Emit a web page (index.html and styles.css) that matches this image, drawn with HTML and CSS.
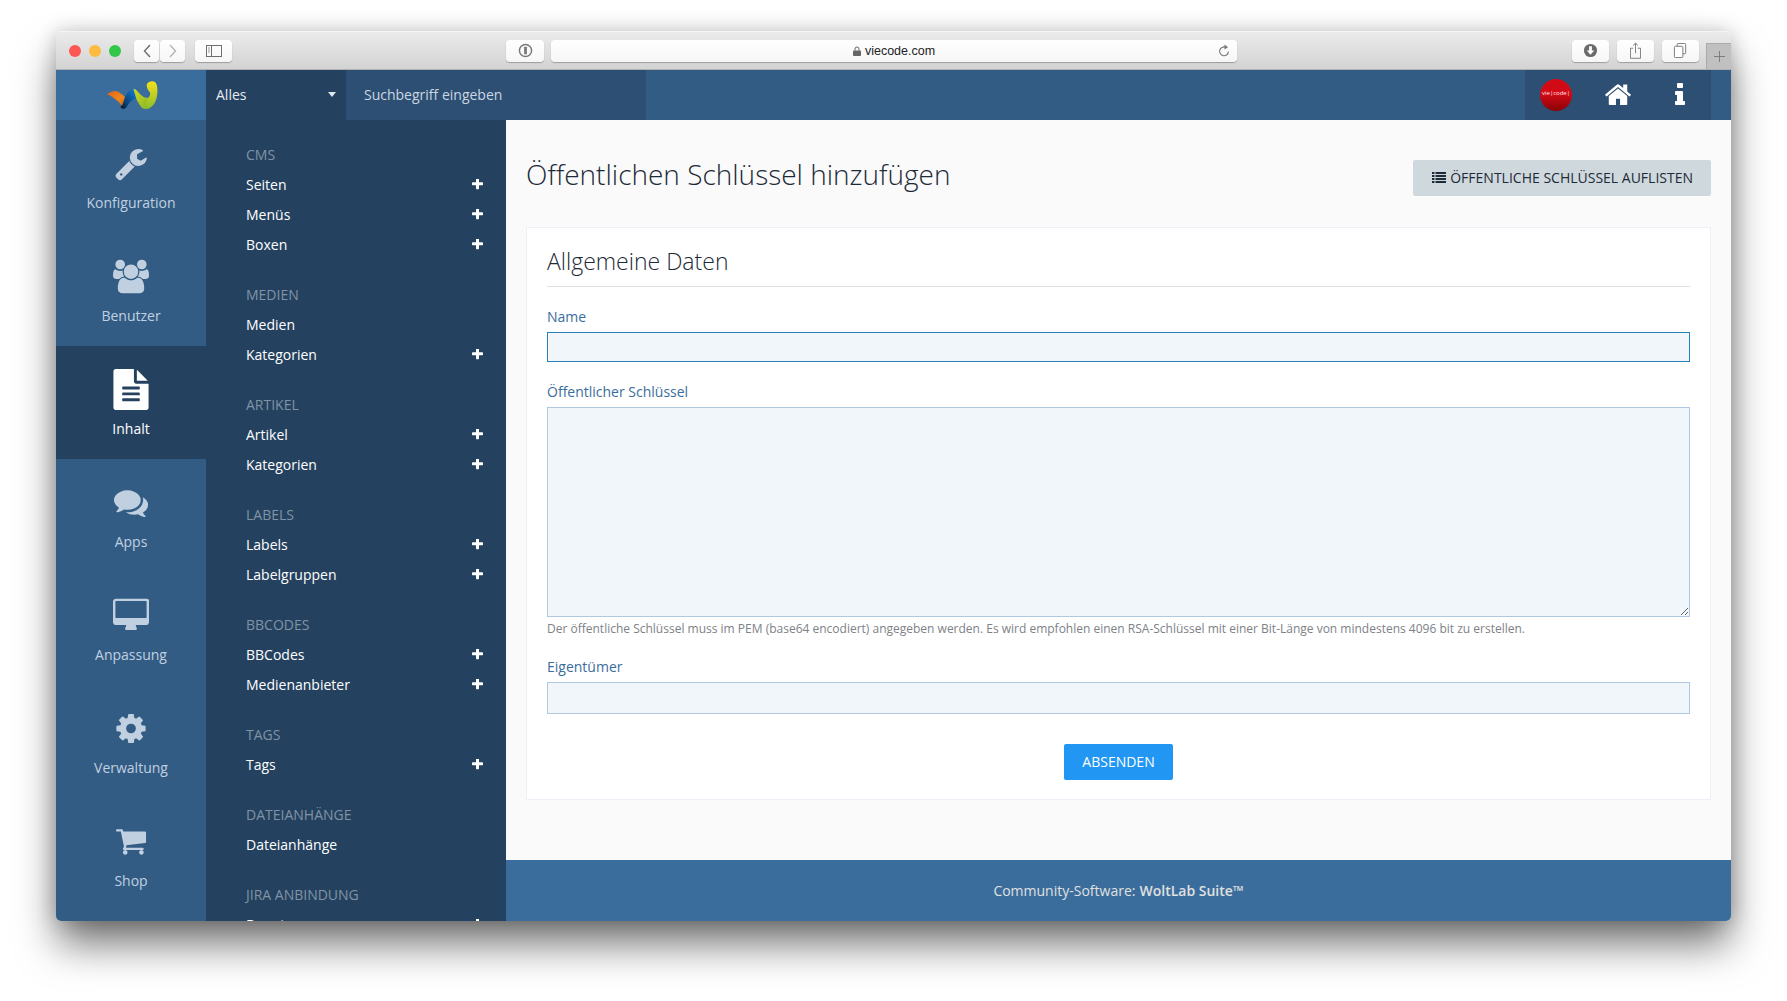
FILE: index.html
```html
<!DOCTYPE html>
<html lang="de">
<head>
<meta charset="utf-8">
<title>Öffentlichen Schlüssel hinzufügen</title>
<link rel="stylesheet" href="styles.css">
</head>
<body>
<svg class="defs" aria-hidden="true">
  <symbol id="i-plus" viewBox="192 192 1408 1408"><path d="M1600 736v192q0 40-28 68t-68 28h-416v416q0 40-28 68t-68 28h-192q-40 0-68-28t-28-68v-416h-416q-40 0-68-28t-28-68v-192q0-40 28-68t68-28h416v-416q0-40 28-68t68-28h192q40 0 68 28t28 68v416h416q40 0 68 28t28 68z" transform="translate(0 -32)"/></symbol>
  <symbol id="i-wrench" viewBox="-50 -50 1892 1892"><path d="M448 1472q0-26-19-45t-45-19-45 19-19 45 19 45 45 19 45-19 19-45zm644-420l-682 682q-37 37-90 37-52 0-91-37l-106-108q-38-36-38-90 0-53 38-91l681-681q39 98 114.5 173.5t173.5 114.5zm634-435q0 39-23 106-47 134-164.5 217.5t-258.5 83.5q-185 0-316.5-131.5t-131.5-316.5 131.5-316.5 316.5-131.5q58 0 121.5 16.5t107.5 46.5q16 11 16 28t-16 28l-293 169v224l193 107q5-3 79-48.5t135.5-81 70.5-35.5q15 0 23.5 10t8.5 25z"/></symbol>
  <symbol id="i-users" viewBox="0 0 1920 1792"><path d="M593 896q-162 5-265 128h-134q-82 0-138-40.5t-56-118.5q0-353 124-353 6 0 43.5 21t97.5 42.5 119 21.5q67 0 133-23-5 37-5 66 0 139 81 256zm1071 637q0 120-73 189.5t-194 69.5h-874q-121 0-194-69.5t-73-189.5q0-53 3.5-103.5t14-109 26.5-108.5 43-97.5 62-81 85.5-53.5 111.5-20q10 0 43 21.5t73 48 107 48 135 21.5 135-21.5 107-48 73-48 43-21.5q61 0 111.5 20t85.5 53.5 62 81 43 97.5 26.5 108.5 14 109 3.5 103.5zm-1024-1277q0 106-75 181t-181 75-181-75-75-181 75-181 181-75 181 75 75 181zm704 384q0 159-112.5 271.5t-271.5 112.5-271.5-112.5-112.5-271.5 112.5-271.5 271.5-112.5 271.5 112.5 112.5 271.5zm576 225q0 78-56 118.5t-138 40.5h-134q-103-123-265-128 81-117 81-256 0-29-5-66 66 23 133 23 59 0 119-21.5t97.5-42.5 43.5-21q124 0 124 353zm-128-609q0 106-75 181t-181 75-181-75-75-181 75-181 181-75 181 75 75 181z"/></symbol>
  <symbol id="i-file" viewBox="128 0 1536 1792"><path d="M1596 476q14 14 28 36h-472v-472q22 14 36 28zm-476 164h544v1056q0 40-28 68t-68 28h-1344q-40 0-68-28t-28-68v-1600q0-40 28-68t68-28h800v544q0 40 28 68t68 28zm160 736v-64q0-14-9-23t-23-9h-704q-14 0-23 9t-9 23v64q0 14 9 23t23 9h704q14 0 23-9t9-23zm0-256v-64q0-14-9-23t-23-9h-704q-14 0-23 9t-9 23v64q0 14 9 23t23 9h704q14 0 23-9t9-23zm0-256v-64q0-14-9-23t-23-9h-704q-14 0-23 9t-9 23v64q0 14 9 23t23 9h704q14 0 23-9t9-23z"/></symbol>
  <symbol id="i-comments" viewBox="-50 -50 1892 1892"><path d="M1408 768q0 139-94 257t-256.5 186.5-353.5 68.5q-86 0-176-16-124 88-278 128-36 9-86 16h-3q-11 0-20.5-8t-11.500-21q-1-3-1-6.500t.5-6.500 2-6l2.500-5 3.500-5.500 4-5 4.500-5 4-4.500q5-6 23-25t26-29.500 22.500-29 25-38.500 20.500-44q-124-72-195-177t-71-224q0-139 94-257t256.500-186.500 353.500-68.500 353.500 68.500 256.500 186.500 94 257zm384 256q0 120-71 224.500t-195 176.500q10 24 20.500 44t25 38.500 22.500 29 26 29.500 23 25q1 1 4 4.500t4.500 5 4 5 3.500 5.500l2.500 5 2 6 .5 6.500-1 6.500q-3 14-13 22t-22 7q-50-7-86-16-154-40-278-128-90 16-176 16-271 0-472-132 58 4 88 4 161 0 309-45t264-129q125-92 192-212t67-254q0-77-23-152 129 71 204 178t75 230z"/></symbol>
  <symbol id="i-desktop" viewBox="0 0 1920 1792"><path d="M1792 992v-832q0-13-9.500-22.500t-22.500-9.500h-1600q-13 0-22.500 9.500t-9.500 22.500v832q0 13 9.500 22.500t22.500 9.500h1600q13 0 22.500-9.500t9.500-22.500zm128-832v1088q0 66-47 113t-113 47h-544q0 37 16 77.500t32 71 16 43.500q0 26-19 45t-45 19h-512q-26 0-45-19t-19-45q0-14 16-44t32-70 16-78h-544q-66 0-113-47t-47-113v-1088q0-66 47-113t113-47h1632q66 0 113 47t47 113z"/></symbol>
  <symbol id="i-cog" viewBox="-50 -50 1892 1892"><path d="M1152 896q0-106-75-181t-181-75-181 75-75 181 75 181 181 75 181-75 75-181zm512-109v222q0 12-8 23t-20 13l-185 28q-19 54-39 91 35 50 107 138 10 12 10 25t-9 23q-27 37-99 108t-94 71q-12 0-26-9l-138-108q-44 23-91 38-16 136-29 186-7 28-36 28h-222q-14 0-24.500-8.500t-11.500-21.500l-28-184q-49-16-90-37l-141 107q-10 9-25 9-14 0-25-11-126-114-165-168-7-10-7-23 0-12 8-23 15-21 51-66.500t54-70.500q-27-50-41-99l-183-27q-13-2-21-12.500t-8-23.500v-222q0-12 8-23t19-13l186-28q14-46 39-92-40-57-107-138-10-12-10-24 0-10 9-23 26-36 98.500-107.500t94.500-71.500q13 0 26 10l138 107q44-23 91-38 16-136 29-186 7-28 36-28h222q14 0 24.500 8.500t11.500 21.500l28 184q49 16 90 37l142-107q9-9 24-9 13 0 25 10 129 119 165 170 7 8 7 22 0 12-8 23-15 21-51 66.500t-54 70.500q26 50 41 98l183 28q13 2 21 12.500t8 23.500z"/></symbol>
  <symbol id="i-cart" viewBox="-100 -60 1992 1992"><path d="M704 1536q0 52-38 90t-90 38-90-38-38-90 38-90 90-38 90 38 38 90zm896 0q0 52-38 90t-90 38-90-38-38-90 38-90 90-38 90 38 38 90zm128-1088v512q0 24-16.500 42.500t-40.500 21.500l-1044 122q13 60 13 70 0 16-24 64h920q26 0 45 19t19 45-19 45-45 19h-1024q-26 0-45-19t-19-45q0-11 8-31.500t16-36 21.500-40 15.500-29.500l-177-823h-204q-26 0-45-19t-19-45 19-45 45-19h256q16 0 28.500 6.500t19.500 15.500 13 24.500 8 26 5.500 29.500 4.500 26h1201q26 0 45 19t19 45z"/></symbol>
  <symbol id="i-home" viewBox="90 230 1610 1310"><path d="M1472 992v480q0 26-19 45t-45 19h-384v-384h-256v384h-384q-26 0-45-19t-19-45v-480q0-1 .5-3t.5-3l575-474 575 474q1 2 1 6zm223-69l-62 74q-8 9-21 11h-3q-13 0-21-7l-692-577-692 577q-12 8-24 7-13-2-21-11l-62-74q-8-10-7-23.500t11-21.500l719-599q32-26 76-26t76 26l244 204v-195q0-14 9-23t23-9h192q14 0 23 9t9 23v408l219 182q10 8 11 21.500t-7 23.500z"/></symbol>
  <symbol id="i-info" viewBox="0 128 640 1408"><path d="M640 1344v128q0 26-19 45t-45 19h-512q-26 0-45-19t-19-45v-128q0-26 19-45t45-19h64v-384h-64q-26 0-45-19t-19-45v-128q0-26 19-45t45-19h384q26 0 45 19t19 45v576h64q26 0 45 19t19 45zm-128-1152v192q0 26-19 45t-45 19h-256q-26 0-45-19t-19-45v-192q0-26 19-45t45-19h256q26 0 45 19t19 45z"/></symbol>
</svg>

<div class="window">
  <div class="toolbar">
    <div class="lights">
      <span class="light light-red"></span>
      <span class="light light-yellow"></span>
      <span class="light light-green"></span>
    </div>
    <div class="nav-pair">
      <span class="tbtn tbtn-nav"><svg class="tico" viewBox="0 0 12 16"><path d="M9 2 3.500 8 9 14" fill="none" stroke="#6e6e6e" stroke-width="1.400"/></svg></span>
      <span class="tbtn tbtn-nav"><svg class="tico" viewBox="0 0 12 16"><path d="M3 2 8.500 8 3 14" fill="none" stroke="#b4b4b4" stroke-width="1.400"/></svg></span>
    </div>
    <span class="tbtn tbtn-wide"><svg class="tico-side" viewBox="0 0 16 12"><rect x=".5" y=".5" width="15" height="11" fill="none" stroke="#6e6e6e"/><path d="M5.500 0v12" stroke="#6e6e6e"/><path d="M2 3h2M2 5h2M2 7h2" stroke="#9a9a9a"/></svg></span>
    <span class="tbtn tbtn-pw"><svg class="tico-pw" viewBox="0 0 16 16"><circle cx="8" cy="8" r="6.500" fill="none" stroke="#7a7a7a" stroke-width="1.600"/><rect x="6.500" y="4" width="3" height="8" rx=".6" fill="#7a7a7a"/></svg></span>
    <div class="address">
      <span class="address-text"><svg class="lock" viewBox="0 0 8 10"><path d="M2 4.500V3a2 2 0 0 1 4 0v1.500" fill="none" stroke="#666" stroke-width="1"/><rect y="4.500" width="8" height="5.500" rx=".8" fill="#666"/></svg>viecode.com</span>
      <svg class="reload" viewBox="0 0 12 14"><path d="M7.500 3.200A4.400 4.400 0 1 0 10.400 7.500" fill="none" stroke="#777" stroke-width="1.100"/><path d="M6.500 0.500 10 3.200 6.500 5.500z" fill="#777"/></svg>
    </div>
    <span class="tbtn tbtn-wide"><svg class="tico-pw" viewBox="0 0 16 16"><circle cx="8" cy="8" r="7" fill="#6a6a6a"/><path d="M6.500 3.500h3V8H12l-4 4.500L4 8h2.500z" fill="#fff"/></svg></span>
    <span class="tbtn tbtn-wide"><svg class="tico-share" viewBox="0 0 12 18"><path d="M3.500 6.500H.5v11h11v-11h-3" fill="none" stroke="#777"/><path d="M6 12V1M3.300 3.600 6 1l2.700 2.600" fill="none" stroke="#777"/></svg></span>
    <span class="tbtn tbtn-wide"><svg class="tico-pw" viewBox="0 0 16 16"><rect x="4.500" y=".5" width="9" height="11" rx="1" fill="none" stroke="#777"/><rect x="1.500" y="3.500" width="9" height="12" rx="1" fill="#fff" stroke="#777"/></svg></span>
    <span class="newtab"><svg class="tico-plus" viewBox="0 0 12 12"><path d="M6 0v12M0 6h12" stroke="#777" stroke-width="1"/></svg></span>
  </div>

  <header class="topbar">
    <a class="logo">
      <svg class="logo-mark" viewBox="0 0 50 28">
        <defs>
          <linearGradient id="w-orange" x1="0" y1="0" x2="1" y2="1">
            <stop offset="0" stop-color="#e2601a"/>
            <stop offset=".6" stop-color="#f0861c"/>
            <stop offset="1" stop-color="#d2660f"/>
          </linearGradient>
          <linearGradient id="w-blue" x1="0" y1="1" x2="1" y2="0">
            <stop offset="0" stop-color="#07121f"/>
            <stop offset=".3" stop-color="#0a3f75"/>
            <stop offset=".65" stop-color="#0e62ab"/>
            <stop offset="1" stop-color="#1a86cc"/>
          </linearGradient>
          <linearGradient id="w-green" x1="0" y1="0" x2="1" y2="1">
            <stop offset="0" stop-color="#dcd81e"/>
            <stop offset="1" stop-color="#7cb52a"/>
          </linearGradient>
          <linearGradient id="w-lime" x1="0" y1="1" x2="0" y2="0">
            <stop offset="0" stop-color="#8fc026"/>
            <stop offset=".55" stop-color="#c6d022"/>
            <stop offset="1" stop-color="#f4e21e"/>
          </linearGradient>
        </defs>
        <path fill="url(#w-blue)" d="M13.500 26C16 21 18 15 21 11 23 9 25 8 26.500 7.700L30 17C27 18 25 19 23 21 21 23 20 26 18 27.500 17 28 14.500 28 13.500 26Z"/>
        <path fill="url(#w-orange)" d="M0 13.300C3 11 6 10 8 10 11 10 15 13 18 16L15 25C13 22 10 19 6 16.500 4 15 2 14 0 13.300Z"/>
        <path fill="url(#w-green)" d="M26.500 7.700C29 8 32 12 34 14 36 16 39 17.500 41.500 16.500L43 27C40 28.500 37 28 34.700 26.700 32 23 30 20 29 16.700 28 13 27 10 26.500 7.700Z"/>
        <path fill="url(#w-lime)" d="M41.500 16.500C43 15 43.500 13 43 11.500 41 9 39 6 40 3 41.500 0 46 -0.500 48 1 50.500 3 51 10 50 15 49 21 46 26 41 27.500 39 27 38 22 41.500 16.500Z"/>
      </svg>
    </a>
    <div class="search-scope"><span>Alles</span><span class="caret"></span></div>
    <div class="search-input">Suchbegriff eingeben</div>
    <div class="topbar-spacer"></div>
    <div class="user-box">
      <span class="avatar">vie|code|</span>
      <svg class="top-home"><use href="#i-home"/></svg>
      <svg class="top-info"><use href="#i-info"/></svg>
    </div>
  </header>

  <div class="body-row">
    <nav class="rail">
      <a class="rail-item"><svg class="rail-icon"><use href="#i-wrench"/></svg><span>Konfiguration</span></a>
      <a class="rail-item"><svg class="rail-icon"><use href="#i-users"/></svg><span>Benutzer</span></a>
      <a class="rail-item active"><svg class="rail-icon"><use href="#i-file"/></svg><span>Inhalt</span></a>
      <a class="rail-item"><svg class="rail-icon"><use href="#i-comments"/></svg><span>Apps</span></a>
      <a class="rail-item"><svg class="rail-icon"><use href="#i-desktop"/></svg><span>Anpassung</span></a>
      <a class="rail-item"><svg class="rail-icon"><use href="#i-cog"/></svg><span>Verwaltung</span></a>
      <a class="rail-item"><svg class="rail-icon"><use href="#i-cart"/></svg><span>Shop</span></a>
    </nav>

    <aside class="menu">
      <section class="menu-group">
        <h3>CMS</h3>
        <a class="menu-row">Seiten<svg class="plus"><use href="#i-plus"/></svg></a>
        <a class="menu-row">Menüs<svg class="plus"><use href="#i-plus"/></svg></a>
        <a class="menu-row">Boxen<svg class="plus"><use href="#i-plus"/></svg></a>
      </section>
      <section class="menu-group">
        <h3>Medien</h3>
        <a class="menu-row">Medien</a>
        <a class="menu-row">Kategorien<svg class="plus"><use href="#i-plus"/></svg></a>
      </section>
      <section class="menu-group">
        <h3>Artikel</h3>
        <a class="menu-row">Artikel<svg class="plus"><use href="#i-plus"/></svg></a>
        <a class="menu-row">Kategorien<svg class="plus"><use href="#i-plus"/></svg></a>
      </section>
      <section class="menu-group">
        <h3>Labels</h3>
        <a class="menu-row">Labels<svg class="plus"><use href="#i-plus"/></svg></a>
        <a class="menu-row">Labelgruppen<svg class="plus"><use href="#i-plus"/></svg></a>
      </section>
      <section class="menu-group">
        <h3>BBCodes</h3>
        <a class="menu-row">BBCodes<svg class="plus"><use href="#i-plus"/></svg></a>
        <a class="menu-row">Medienanbieter<svg class="plus"><use href="#i-plus"/></svg></a>
      </section>
      <section class="menu-group">
        <h3>Tags</h3>
        <a class="menu-row">Tags<svg class="plus"><use href="#i-plus"/></svg></a>
      </section>
      <section class="menu-group">
        <h3>Dateianhänge</h3>
        <a class="menu-row">Dateianhänge</a>
      </section>
      <section class="menu-group">
        <h3>Jira Anbindung</h3>
        <a class="menu-row">Benutzernamen<svg class="plus"><use href="#i-plus"/></svg></a>
      </section>
    </aside>

    <div class="page">
      <main class="content">
        <div class="content-head">
          <h1>Öffentlichen Schlüssel hinzufügen</h1>
          <a class="btn btn-list">
            <svg class="list-ico" viewBox="0 0 14 11"><path d="M0 0h2.500v2H0zM3.500 0H14v2H3.500zM0 3h2.500v2H0zM3.500 3H14v2H3.500zM0 6h2.500v2H0zM3.500 6H14v2H3.500zM0 9h2.500v2H0zM3.500 9H14v2H3.500z"/></svg>Öffentliche Schlüssel auflisten
          </a>
        </div>
        <form class="card">
          <h2>Allgemeine Daten</h2>
          <label class="field-label">Name</label>
          <input class="field field-focus" type="text">
          <label class="field-label">Öffentlicher Schlüssel</label>
          <textarea class="field field-area"></textarea>
          <p class="hint">Der öffentliche Schlüssel muss im PEM (base64 encodiert) angegeben werden. Es wird empfohlen einen RSA-Schlüssel mit einer Bit-Länge von mindestens 4096 bit zu erstellen.</p>
          <label class="field-label field-label-after">Eigentümer</label>
          <input class="field field-tall" type="text">
          <div class="submit-row"><button class="btn btn-primary" type="button">Absenden</button></div>
        </form>
      </main>
      <footer class="footer">Community-Software: <b>WoltLab Suite™</b></footer>
    </div>
  </div>
</div>
</body>
</html>
```
FILE: styles.css
```css
* { box-sizing: border-box; }
html, body { height: 100%; }
body {
  margin: 0;
  background: #fff;
  overflow: hidden;
  font-family: "Open Sans", "Noto Sans", sans-serif;
  font-size: 14px;
  color: #2d3e50;
}
a { color: inherit; text-decoration: none; }
.defs { display: none; }

.window {
  width: 1675px;
  height: 890px;
  margin: 31px 0 0 56px;
  border-radius: 5px;
  overflow: hidden;
  display: flex;
  flex-direction: column;
  box-shadow: 0 25px 40px -2px rgba(0, 0, 0, .55), 0 0 20px rgba(0, 0, 0, .2);
}

/* browser chrome */
.toolbar {
  flex: 0 0 39px;
  display: flex;
  align-items: center;
  padding: 0 0 0 13px;
  background: linear-gradient(#ebebeb, #d3d3d3);
  border-top: 1px solid #f4f4f4;
  border-bottom: 1px solid #b1b1b1;
  position: relative;
}
.lights { display: flex; gap: 8px; margin-right: 13px; }
.light { width: 12px; height: 12px; border-radius: 50%; }
.light-red { background: #fc5753; }
.light-yellow { background: #fdbc40; }
.light-green { background: #33c748; }
.nav-pair { display: flex; gap: 1px; margin-right: 10px; }
.tbtn {
  height: 22px;
  display: flex;
  align-items: center;
  justify-content: center;
  border-radius: 4px;
  background: linear-gradient(#fff, #f6f6f6);
  box-shadow: 0 1px 1px rgba(0, 0, 0, .28);
}
.tbtn-nav { width: 25px; }
.tbtn-wide { width: 37px; margin-right: 8px; }
.tbtn-pw { width: 38px; margin-left: 266px; margin-right: 7px; }
.tico { width: 12px; height: 16px; }
.tico-side { width: 16px; height: 12px; }
.tico-pw { width: 15px; height: 15px; }
.tico-share { width: 11px; height: 17px; }
.address {
  width: 686px;
  height: 22px;
  margin-right: 335px;
  display: flex;
  align-items: center;
  justify-content: center;
  position: relative;
  border-radius: 4px;
  background: linear-gradient(#fff, #f6f6f6);
  box-shadow: 0 1px 1px rgba(0, 0, 0, .28);
  font: 12.5px "Liberation Sans", sans-serif;
  color: #222;
}
.address-text { display: flex; align-items: center; gap: 4px; padding-top: 1px; }
.lock { width: 8px; height: 10px; }
.reload { position: absolute; right: 7px; top: 4px; width: 12px; height: 14px; }
.newtab {
  position: absolute;
  right: 0;
  bottom: 0;
  width: 25px;
  height: 26px;
  background: #c0c0c0;
  border: 1px solid #aaa;
  border-width: 1px 0 0 1px;
  display: flex;
  align-items: center;
  justify-content: center;
}
.tico-plus { width: 11px; height: 11px; }

/* application header */
.topbar {
  flex: 0 0 50px;
  display: flex;
  background: #325c84;
  color: #fff;
}
.logo {
  width: 150px;
  padding-left: 2px;
  background: #3a6d9c;
  display: flex;
  align-items: center;
  justify-content: center;
}
.logo-mark { width: 50px; height: 28px; overflow: visible; }
.search-scope {
  width: 140px;
  padding: 0 10px 2px;
  background: #24425f;
  display: flex;
  align-items: center;
  justify-content: space-between;
  color: #e6ecf1;
}
.caret {
  width: 0;
  height: 0;
  border: 4px solid transparent;
  border-top: 5px solid #dfe6ec;
  border-bottom: 0;
}
.search-input {
  width: 300px;
  padding: 0 18px 2px;
  background: #2c4f73;
  display: flex;
  align-items: center;
  color: #cbd6e1;
}
.topbar-spacer { flex: 1; }
.user-box {
  width: 186px;
  margin-right: 20px;
  padding-bottom: 2px;
  background: #2c4f73;
  display: flex;
  align-items: center;
  position: relative;
}
.avatar {
  width: 32px;
  height: 32px;
  margin: 2px 0 0 15px;
  border-radius: 50%;
  background: linear-gradient(#d20a16 0 45%, #8a0207);
  font-size: 6px;
  line-height: 28px;
  text-align: center;
  color: #fbe6e6;
  overflow: hidden;
  white-space: nowrap;
}
.top-home { width: 26px; height: 21px; margin-left: 33px; fill: #fff; }
.top-info { width: 10px; height: 22px; margin-left: 44px; fill: #fff; }

/* body */
.body-row { flex: 1; display: flex; min-height: 0; }
.rail {
  width: 150px;
  flex: none;
  background: #325c84;
  overflow: hidden;
}
.rail-item {
  height: 113px;
  display: flex;
  flex-direction: column;
  align-items: center;
  color: #c1d0e0;
  fill: #c1d0e0;
  padding-top: 23px;
}
.rail-item span { margin-top: 9px; line-height: 20px; }
.rail-icon { width: 36px; height: 41px; display: block; }
.rail-item.active { background: #24425f; color: #fff; fill: #fff; }

.menu {
  width: 300px;
  flex: none;
  padding: 19px 20px 0 40px;
  background: #24425f;
  overflow: hidden;
}
.menu-group { margin-bottom: 20px; }
.menu-group h3 {
  margin: 0;
  height: 30px;
  line-height: 31px;
  font-size: 14px;
  font-weight: 400;
  text-transform: uppercase;
  color: #8093a6;
}
.menu-row {
  height: 30px;
  display: flex;
  align-items: center;
  justify-content: space-between;
  color: #fff;
}
.plus { width: 11px; height: 11px; fill: #fff; margin-right: 3px; }

.page { flex: 1; min-width: 0; display: flex; flex-direction: column; }
.content { flex: 1; padding: 20px; background: #fafafa; }
.content-head { display: flex; justify-content: space-between; align-items: flex-start; height: 67px; margin-bottom: 20px; }
h1 {
  margin: 10px 0 0;
  font-size: 28px;
  font-weight: 300;
  line-height: 48px;
  color: #1d2a38;
}
.btn {
  display: inline-flex;
  align-items: center;
  height: 36px;
  padding: 0 18px 2px;
  border: 0;
  border-radius: 2px;
  font: 14px "Open Sans", sans-serif;
  text-transform: uppercase;
}
.btn-list { margin-top: 20px; padding-left: 19px; background: #cfd8dc; color: #1d2a38; }
.list-ico { width: 14px; height: 11px; margin-right: 4px; fill: #1d2a38; }
.btn-primary { padding: 0 18.500px 2px; background: #2196f3; color: #fff; }

.card {
  background: #fff;
  border: 1px solid #ecf1f7;
  padding: 20px;
  padding-bottom: 19px;
  display: flex;
  flex-direction: column;
}
h2 {
  margin: 0 0 19px;
  padding-bottom: 12px;
  border-bottom: 1px solid #e0e0e0;
  font-size: 23px;
  font-weight: 300;
  line-height: 26px;
  color: #1d2a38;
}
.field-label { line-height: 21px; margin-bottom: 5px; color: #3a6d9c; }
.field-label-after { margin-top: 19px; }
.field {
  display: block;
  width: 100%;
  height: 30px;
  margin: 0 0 19px;
  padding: 4px 8px;
  border: 1px solid #b0c8e0;
  background: #f1f6fb;
  border-radius: 0;
  outline: 0;
}
.field-focus { border-color: #2980b9; }
.field-area { height: 210px; margin-bottom: 4px; }
.field-tall { height: 32px; margin-bottom: 30px; }
.hint { margin: 0; font-size: 12px; line-height: 16px; color: #7d8287; }
.submit-row { display: flex; justify-content: center; }

.footer {
  flex: 0 0 61px;
  background: #3a6d9c;
  display: flex;
  align-items: center;
  justify-content: center;
  gap: 4px;
  color: #e0e0e0;
}
.footer b { font-weight: 600; }
```
